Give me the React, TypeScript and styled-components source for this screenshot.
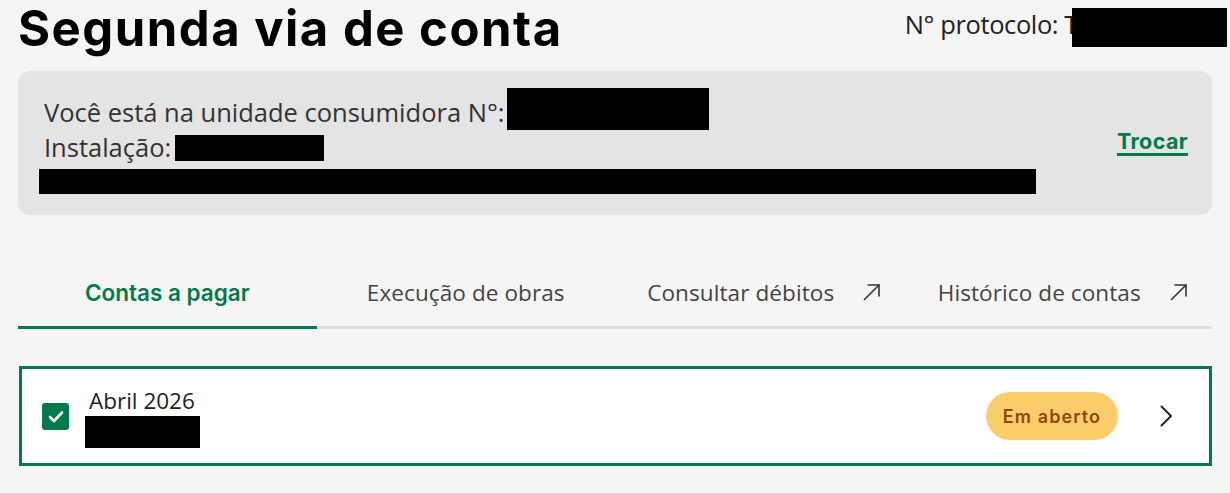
import React from "react";
import styled, { createGlobalStyle } from "styled-components";

const GREEN = "#037a4b";

const Global = createGlobalStyle`
  html, body { margin: 0; padding: 0; background: #f5f5f5; }
  body { font-family: "Open Sans", "Noto Sans", sans-serif; color: #333; }
  * { box-sizing: border-box; }
`;

const Page = styled.div`
  width: 1230px;
  height: 493px;
  overflow: hidden;
  padding: 0 18px 0 18px;
  display: flex;
  flex-direction: column;
`;

const Header = styled.header`
  display: flex;
  justify-content: space-between;
  align-items: flex-start;
  height: 71px;
`;

const Title = styled.h1`
  margin: 0;
  padding-top: 3px;
  font-family: Inter, "Noto Sans", sans-serif;
  font-weight: 700;
  font-size: 49px;
  line-height: 52px;
  letter-spacing: 1.5px;
  color: #000;
  white-space: nowrap;
`;

const Protocol = styled.div`
  display: flex;
  align-items: flex-start;
  font-size: 25.5px;
  line-height: 30px;
  letter-spacing: -0.4px;
  color: #222;
  padding-top: 8px;
  margin-right: -15px;
`;

const ProtoLabel = styled.span`
  padding-top: 1px;
  white-space: nowrap;
`;

const Redact = styled.span<{ $w: number; $h: number }>`
  display: block;
  flex: none;
  width: ${(p) => p.$w}px;
  height: ${(p) => p.$h}px;
  background: #000;
`;

const UnitCard = styled.section`
  background: #e4e4e4;
  border-radius: 12px;
  height: 144px;
  padding: 17px 24px 0 26px;
  display: flex;
  align-items: flex-start;
  justify-content: space-between;
`;

const UnitInfo = styled.div`
  display: flex;
  flex-direction: column;
`;

const InfoLine = styled.div<{ $h: number }>`
  display: flex;
  align-items: flex-start;
  height: ${(p) => p.$h}px;
  font-size: 25.5px;
  line-height: 30px;
  color: #333;
  white-space: nowrap;
`;

const InfoLabel = styled.span<{ $top: number; $gap: number }>`
  padding-top: ${(p) => p.$top}px;
  margin-right: ${(p) => p.$gap}px;
`;

const AddressLine = styled.div`
  margin-left: -5px;
  height: 25px;
  width: 997px;
  background: #000;
`;

const Trocar = styled.a`
  margin-top: 40px;
  font-family: Inter, "Noto Sans", sans-serif;
  font-weight: 700;
  font-size: 21.5px;
  line-height: 26px;
  letter-spacing: 0.4px;
  color: ${GREEN};
  text-decoration: underline;
  text-decoration-thickness: 3px;
  text-underline-offset: 4px;
`;

const Tabs = styled.nav`
  margin-top: 48px;
  display: grid;
  grid-template-columns: repeat(4, 1fr);
  border-bottom: 3px solid #dedede;
`;

const Tab = styled.div<{ $active?: boolean }>`
  padding: 15px 0 18px;
  display: flex;
  align-items: center;
  justify-content: center;
  gap: 29px;
  font-family: ${(p) => (p.$active ? `Inter, "Noto Sans", sans-serif` : `"Open Sans", sans-serif`)};
  font-weight: ${(p) => (p.$active ? 600 : 400)};
  font-size: 22.5px;
  line-height: 30px;
  letter-spacing: ${(p) => (p.$active ? "0" : "0.1px")};
  color: ${(p) => (p.$active ? GREEN : "#444")};
  margin-bottom: -3px;
  border-bottom: 3px solid ${(p) => (p.$active ? GREEN : "transparent")};
  white-space: nowrap;
`;

const ExternalIcon = styled.svg`
  width: 18px;
  height: 17px;
  flex: none;
  margin-top: -1px;
`;

const BillRow = styled.div`
  margin-top: 37px;
  margin-left: 1px;
  height: 100px;
  background: #fff;
  border: 3px solid ${GREEN};
  display: flex;
  align-items: center;
  padding: 0 36px 0 20px;
`;

const Checkbox = styled.span`
  width: 27px;
  height: 27px;
  flex: none;
  border-radius: 3px;
  background: ${GREEN};
  display: flex;
  align-items: center;
  justify-content: center;
  margin-right: 20px;
`;

const BillInfo = styled.div`
  display: flex;
  flex-direction: column;
  flex: 1;
  margin-top: 4px;
`;

const Month = styled.div`
  font-size: 22.5px;
  line-height: 26px;
  color: #222;
  margin-bottom: 2px;
`;

const Badge = styled.span`
  background: #fbcd6a;
  color: #8b4a0a;
  font-family: Inter, "Noto Sans", sans-serif;
  font-weight: 600;
  font-size: 18px;
  letter-spacing: 1.1px;
  height: 48px;
  width: 132px;
  border-radius: 24px;
  display: flex;
  align-items: center;
  justify-content: center;
  margin-right: 42px;
`;

const Chevron = styled.svg`
  width: 13px;
  height: 22px;
  flex: none;
`;

function Arrow() {
  return (
    <ExternalIcon viewBox="0 0 18 17" fill="none" stroke="#333" strokeWidth={1.6} strokeLinecap="round" strokeLinejoin="round">
      <path d="M1.5 15.5 L16 1" />
      <path d="M5 1 H16 V12" />
    </ExternalIcon>
  );
}

export default function App() {
  return (
    <>
      <Global />
      <Page>
        <Header>
          <Title>Segunda via de conta</Title>
          <Protocol>
            <ProtoLabel>N° protocolo: T</ProtoLabel>
            <Redact $w={155} $h={39} style={{ marginLeft: -6 }} />
          </Protocol>
        </Header>
        <UnitCard>
          <UnitInfo>
            <InfoLine $h={42}>
              <InfoLabel $top={9} $gap={2}>Você está na unidade consumidora N°:</InfoLabel>
              <Redact $w={202} $h={42} />
            </InfoLine>
            <InfoLine $h={39}>
              <InfoLabel $top={2} $gap={4}>Instalação:</InfoLabel>
              <Redact $w={149} $h={26} style={{ marginTop: 5 }} />
            </InfoLine>
            <AddressLine />
          </UnitInfo>
          <Trocar href="#">Trocar</Trocar>
        </UnitCard>
        <Tabs>
          <Tab $active>Contas a pagar</Tab>
          <Tab>Execução de obras</Tab>
          <Tab>
            <span>Consultar débitos</span>
            <Arrow />
          </Tab>
          <Tab>
            <span>Histórico de contas</span>
            <Arrow />
          </Tab>
        </Tabs>
        <BillRow>
          <Checkbox>
            <svg width="16" height="13" viewBox="0 0 16 13" fill="none" stroke="#fff" strokeWidth={2.6} strokeLinecap="round" strokeLinejoin="round">
              <path d="M2 7 L6 11 L14 2.5" />
            </svg>
          </Checkbox>
          <BillInfo>
            <Month>Abril 2026</Month>
            <Redact $w={115} $h={32} style={{ marginLeft: -4 }} />
          </BillInfo>
          <Badge>Em aberto</Badge>
          <Chevron viewBox="0 0 13 22" fill="none" stroke="#222" strokeWidth={2} strokeLinecap="round" strokeLinejoin="round">
            <path d="M1.5 1.5 L11 11 L1.5 20.5" />
          </Chevron>
        </BillRow>
      </Page>
    </>
  );
}
